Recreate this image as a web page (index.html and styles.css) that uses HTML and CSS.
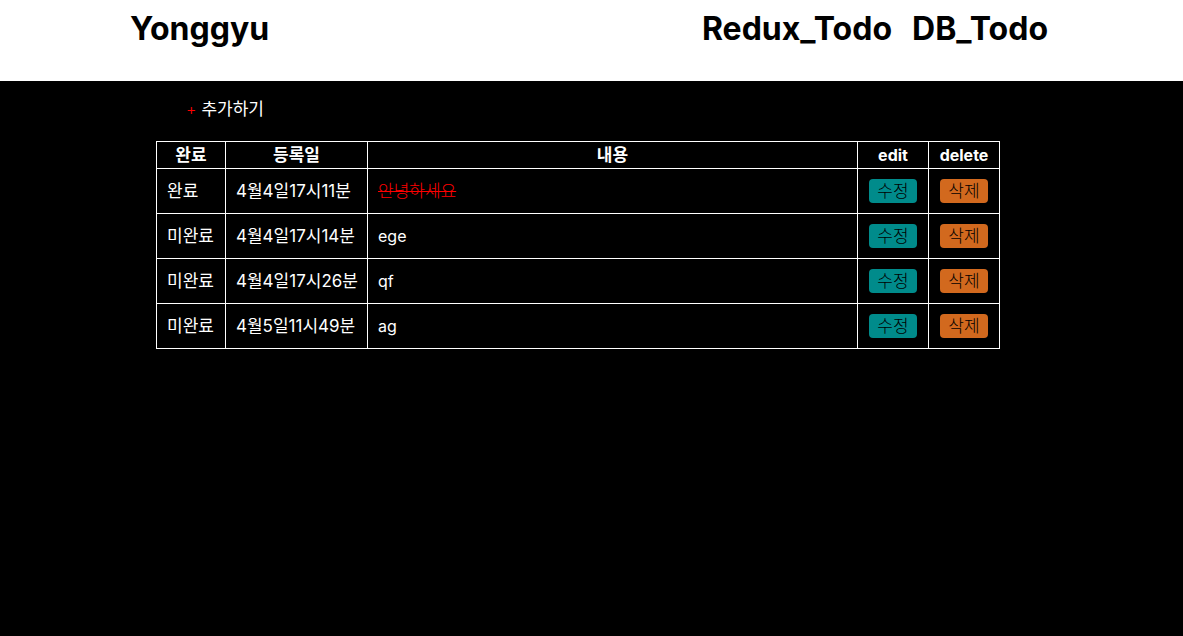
FILE: index.html
```html
<!DOCTYPE html>
<html lang="ko">
<head>
<meta charset="utf-8">
<title>Todo</title>
<link rel="stylesheet" href="styles.css">
</head>
<body>
<header class="header">
  <a class="brand" href="#">Yonggyu</a>
  <nav class="nav"><a href="#">Redux_Todo</a><a href="#">DB_Todo</a></nav>
</header>
<main class="main">
  <button class="add" type="button"><span class="plus">+</span><span class="ko">추가하기</span></button>
  <table class="todos">
    <thead>
      <tr><th class="state ko">완료</th><th class="date ko">등록일</th><th class="ko">내용</th><th class="action">edit</th><th class="action">delete</th></tr>
    </thead>
    <tbody>
      <tr><td class="ko">완료</td><td class="ko">4월4일17시11분</td><td class="ko done">안녕하세요</td><td><button class="btn edit ko" type="button">수정</button></td><td><button class="btn delete ko" type="button">삭제</button></td></tr>
      <tr><td class="ko">미완료</td><td class="ko">4월4일17시14분</td><td>ege</td><td><button class="btn edit ko" type="button">수정</button></td><td><button class="btn delete ko" type="button">삭제</button></td></tr>
      <tr><td class="ko">미완료</td><td class="ko">4월4일17시26분</td><td>qf</td><td><button class="btn edit ko" type="button">수정</button></td><td><button class="btn delete ko" type="button">삭제</button></td></tr>
      <tr><td class="ko">미완료</td><td class="ko">4월5일11시49분</td><td>ag</td><td><button class="btn edit ko" type="button">수정</button></td><td><button class="btn delete ko" type="button">삭제</button></td></tr>
    </tbody>
  </table>
</main>
</body>
</html>
```
FILE: styles.css
```css
* { box-sizing: border-box; }
body {
  margin: 0;
  min-height: 100vh;
  background: #000;
  color: #fff;
  font: 16px/24px Inter, "Noto Sans CJK KR", sans-serif;
}
.header {
  display: flex;
  justify-content: space-between;
  padding: 9px 135px 32px 130px;
  background: #fff;
  font-size: 32px;
  line-height: 40px;
  font-weight: 700;
}
.header a { color: #000; text-decoration: none; }
.nav { display: flex; gap: 20px; }
.main { padding: 16px 183px 0 156px; }
.add {
  display: flex;
  align-items: center;
  gap: 5px;
  margin: 0 0 20px 30px;
  padding: 0;
  border: 0;
  background: none;
  color: #fff;
  font: inherit;
  cursor: pointer;
}
.plus { color: #f00; font-size: 16px; font-weight: 300; }
.todos { width: 100%; border-collapse: collapse; table-layout: fixed; }
.todos th, .todos td { border: 1px solid #fff; white-space: nowrap; }
.todos th { height: 27px; padding: 0; font-weight: 700; }
.todos td { height: 45px; padding: 10px; text-align: left; }
.state { width: 69px; }
.date { width: 142px; }
.action { width: 71px; }
.todos .done { color: #f00; font-weight: 300; text-decoration: line-through 1px; }
.btn {
  display: block;
  width: 48px;
  height: 24px;
  margin: 0 auto;
  padding: 0;
  border: 0;
  border-radius: 4px;
  color: #000;
  font: inherit;
  font-weight: 300;
  cursor: pointer;
}
.edit { background: #008b8b; }
.delete { background: #d2691e; }
.ko { font-size: 17px; }
```
